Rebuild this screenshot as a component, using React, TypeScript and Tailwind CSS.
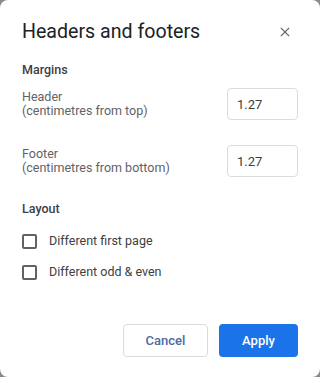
export default function App() {
  return (
    <div className="w-[320px] h-[377px] bg-[#8a8a8a]" style={{ fontFamily: 'Roboto, "Liberation Sans", sans-serif' }}>
      <div className="w-full h-full bg-white rounded-[8px] flex flex-col px-[22px] pt-[19px] pb-[20px]">
        <div className="flex items-center justify-between h-[26px]">
          <h1 className="text-[19.6px] text-[#202124] leading-none">Headers and footers</h1>
          <svg width="10" height="10" viewBox="0 0 12 12" className="mr-[8px]">
            <path d="M1 1 L11 11 M11 1 L1 11" stroke="#5f6368" strokeWidth="1.5" />
          </svg>
        </div>

        <p className="mt-[17px] text-[12.5px] font-medium text-[#3c4043] leading-[16px]">Margins</p>

        <div className="mt-[10px] flex items-center justify-between">
          <div className="text-[12.5px] text-[#5f6368] leading-[14px]">
            <div>Header</div>
            <div>(centimetres from top)</div>
          </div>
          <input
            defaultValue="1.27"
            className="w-[71px] h-[32px] border border-[#dadce0] rounded-[4px] px-[9px] text-[13px] text-[#3c4043] outline-none"
          />
        </div>

        <div className="mt-[25px] flex items-center justify-between">
          <div className="text-[12.5px] text-[#5f6368] leading-[14px]">
            <div>Footer</div>
            <div>(centimetres from bottom)</div>
          </div>
          <input
            defaultValue="1.27"
            className="w-[71px] h-[32px] border border-[#dadce0] rounded-[4px] px-[9px] text-[13px] text-[#3c4043] outline-none"
          />
        </div>

        <p className="mt-[24px] text-[12.5px] font-medium text-[#3c4043] leading-[16px]">Layout</p>

        <div className="mt-[17px] flex flex-col gap-[16px]">
          {['Different first page', 'Different odd & even'].map((label) => (
            <label key={label} className="flex items-center gap-[12px] h-[15px]">
              <span className="w-[15px] h-[15px] border-2 border-[#5f6368] rounded-[2px]" />
              <span className="text-[12.5px] text-[#3c4043]">{label}</span>
            </label>
          ))}
        </div>

        <div className="mt-auto flex justify-end gap-[11px]">
          <button className="w-[85px] h-[33px] border border-[#dadce0] rounded-[4px] text-[13px] font-medium text-[#4a6ba3]">
            Cancel
          </button>
          <button className="w-[79px] h-[33px] rounded-[4px] bg-[#1a73e8] text-[13px] font-medium text-white">
            Apply
          </button>
        </div>
      </div>
    </div>
  );
}
